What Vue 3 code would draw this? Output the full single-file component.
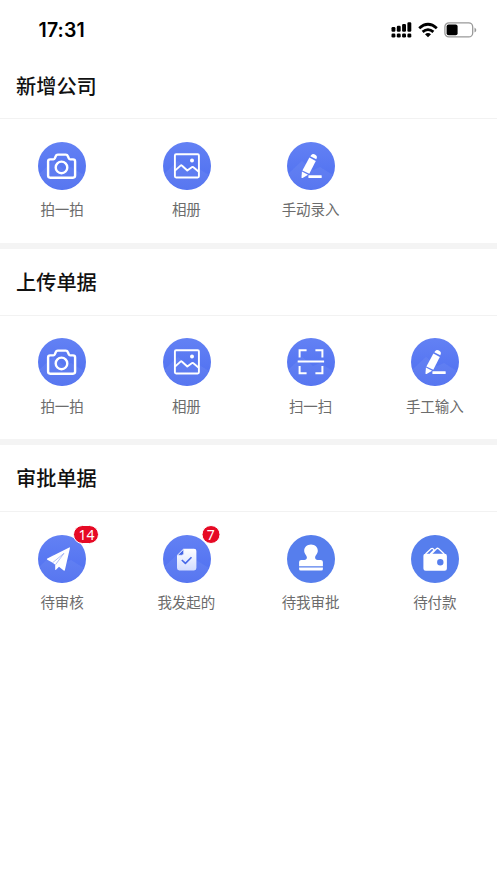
<script setup>
const sections = [
  {
    title: '新增公司',
    items: [
      { label: '拍一拍', icon: 'camera' },
      { label: '相册', icon: 'album' },
      { label: '手动录入', icon: 'pencil' },
    ],
  },
  {
    title: '上传单据',
    items: [
      { label: '拍一拍', icon: 'camera' },
      { label: '相册', icon: 'album' },
      { label: '扫一扫', icon: 'scan' },
      { label: '手工输入', icon: 'pencil' },
    ],
  },
  {
    title: '审批单据',
    items: [
      { label: '待审核', icon: 'plane', badge: 14 },
      { label: '我发起的', icon: 'document', badge: 7 },
      { label: '待我审批', icon: 'stamp', flat: true },
      { label: '待付款', icon: 'wallet', flat: true },
    ],
  },
]
</script>

<template>
  <div class="page">
    <header class="status">
      <span class="time">17:31</span>
      <div class="indicators">
        <svg class="signal" width="21" height="17" viewBox="0 0 21 17">
          <rect x="0.5" y="6" width="3.9" height="4.8" rx="1.2" />
          <rect x="5.8" y="4.8" width="3.9" height="6" rx="1.2" />
          <rect x="11.1" y="3" width="3.9" height="7.8" rx="1.2" />
          <rect x="16.4" y="1.2" width="3.9" height="9.6" rx="1.2" />
          <rect v-for="n in 4" :key="n" :x="n * 5.3 - 4.8" y="12.5" width="3.9" height="4" rx="1.3" />
        </svg>
        <svg class="wifi" width="20" height="16" viewBox="0 0 20 16" fill="none" stroke="#000" stroke-width="2.8">
          <path d="M1.2 6.2Q10-1.6 18.8 6.2" />
          <path d="M4.6 9.9Q10 5.3 15.4 9.9" />
          <path d="M10 15.2l-3-3Q10 9.8 13 12.2z" fill="#000" stroke="none" />
        </svg>
        <svg class="battery" width="33" height="16" viewBox="0 0 33 16">
          <rect x="0.9" y="0.9" width="27.8" height="14" rx="4" fill="none" stroke="#999" stroke-width="1.3" />
          <rect x="2.6" y="2.6" width="11" height="10.6" rx="2" />
          <path d="M30.5 5.5q1.8 1 1.8 2.5t-1.8 2.5z" fill="#999" />
        </svg>
      </div>
    </header>

    <section v-for="section in sections" :key="section.title" class="section">
      <h2 class="title">{{ section.title }}</h2>
      <div class="grid">
        <div v-for="item in section.items" :key="item.label" class="item">
          <div class="circle" :class="{ flat: item.flat }">
            <svg width="48" height="48" viewBox="0 0 48 48" fill="none" stroke="#fff" stroke-linejoin="round">
              <path v-if="!item.flat" d="M2 31L15 19 26 28 33 25 46 33A24 24 0 0 1 2 33Z" fill="#fff" fill-opacity=".06" stroke="none" />
              <g v-if="item.icon === 'camera'" stroke-width="2.4">
                <path d="M12.2 17.4h3.2q1 0 1.4-1l1-2.4q.5-1.4 2-1.4h8q1.5 0 2 1.4l1 2.4q.4 1 1.4 1h2.8q2.1 0 2.1 2.1v14.1q0 2.1-2.1 2.1H12.2q-2.1 0-2.1-2.1V19.5q0-2.1 2.1-2.1z" />
                <circle cx="23.5" cy="25.4" r="5.8" />
              </g>
              <g v-else-if="item.icon === 'album'" stroke-width="1.9">
                <rect x="11.9" y="12.3" width="24" height="23.2" rx="1.2" />
                <path d="M12 28.6l5.8-5.2q.5-.4 1 .1l5.5 5 4.8-3.5q.5-.3 1 .1l5.7 4.6" />
                <circle cx="29" cy="18.5" r="2" fill="#fff" stroke="none" />
              </g>
              <g v-else-if="item.icon === 'pencil'" fill="#fff" stroke="none">
                <path d="M23.3 14.2l1-1.3q1.3-1.7 3.7-.5 2.5 1.3 1.9 3.2l-.6 1.6z" />
                <path d="M22.4 15.5l6.4 3.4-6.5 12.8-6.9-3.2z" />
                <path d="M14.9 29.6l6.2 3.2-5.5 3.2q-1.1.3-1.1-.8z" />
                <rect x="21.4" y="33.3" width="13.3" height="2.6" rx=".5" />
              </g>
              <g v-else-if="item.icon === 'scan'" stroke-width="2" stroke-linejoin="miter">
                <path d="M12.6 19.6v-7.3h7M28.4 12.3h7v7.3M12.6 28v7.2h7M28.4 35.2h7V28M10.7 23.5h26.4" />
              </g>
              <g v-else-if="item.icon === 'plane'" fill="#fff" stroke="none">
                <path d="M31.2 12.4q.9-.2.7.9l-5 21.7q-.3 1-1.2.4L21 31.8l-3 3q-.8.6-.8-.4v-4.7l-2.5-2-5.4-3q-1-.6 0-1.1z" />
                <path d="M14.8 27.5L26 18.3 17.6 29.6" stroke="#7f96f0" stroke-width=".6" />
              </g>
              <g v-else-if="item.icon === 'document'">
                <path d="M20.5 13.7H31q2.4 0 2.4 2.3v17q0 2.4-2.4 2.4H16.4q-2.4 0-2.4-2.4V20.2z" fill="url(#paper)" stroke="none" />
                <path d="M20.7 14.2v4.1q0 2-2 2h-4.2z" fill="#4465e5" stroke="#e4eaff" stroke-width=".8" />
                <path d="M18.8 25l3.6 3.4 6.1-6.2" stroke="#4668e8" stroke-width="1.6" />
              </g>
              <g v-else-if="item.icon === 'stamp'" fill="#fff" stroke="none">
                <path d="M24 9.6c4 0 6.8 2.9 6.8 6.2 0 3.3-2.7 4.3-2.7 6.8 0 1.7 1 2.3 2.5 2.3h3.1q2.2 0 2.2 2.2v4.1H12.1v-4.1q0-2.2 2.2-2.2h3.1c1.5 0 2.5-.6 2.5-2.3 0-2.5-2.7-3.5-2.7-6.8 0-3.3 2.8-6.2 6.8-6.2z" />
                <path d="M12.1 32.4h23.8v1.7q0 1.5-1.5 1.5H13.6q-1.5 0-1.5-1.5z" />
              </g>
              <g v-else-if="item.icon === 'wallet'">
                <path d="M14.5 19l5.6-5.2q1.1-1 2.1.1l1 1.1-4 4M20.4 19l5.1-5.2q1-1 2.2 0l5.5 5.2" stroke-width="1.3" />
                <path fill-rule="evenodd" d="M14.4 18.7h19.2q2.3 0 2.3 2.3v12.4q0 2.3-2.3 2.3H14.7q-2.3 0-2.3-2.3V20.7q0-2 2-2zM29.3 24.1a3.2 3.2 0 1 0 0 6.4 3.2 3.2 0 0 0 0-6.4z" fill="#fff" stroke="none" />
              </g>
              <defs v-if="item.icon === 'document'">
                <linearGradient id="paper" x1="0" y1="0" x2="0" y2="1">
                  <stop stop-color="#fff" />
                  <stop offset="1" stop-color="#d2dcff" />
                </linearGradient>
              </defs>
            </svg>
            <span v-if="item.badge" class="badge">{{ item.badge }}</span>
          </div>
          <span class="label">{{ item.label }}</span>
        </div>
      </div>
    </section>
  </div>
</template>

<style>
body {
  background: #fff;
}
</style>

<style scoped>
.page {
  width: 100%;
  height: 883px;
  overflow: hidden;
  font-family: "Noto Sans CJK SC", sans-serif;
}
.status {
  box-sizing: border-box;
  height: 52px;
  padding: 8px 20px 0 38.5px;
  display: flex;
  justify-content: space-between;
  align-items: center;
}
.time {
  font: 600 19.5px/24px Inter, sans-serif;
  letter-spacing: 0.15px;
  color: #000;
}
.indicators {
  display: flex;
  align-items: center;
  gap: 7px;
}
.signal {
  margin: 0 -1px 2px 0;
}
.battery {
  margin-left: -1px;
}
.section + .section {
  border-top: 6px solid #f4f4f4;
}
.title {
  box-sizing: border-box;
  height: 67px;
  margin: 0;
  padding-left: 16px;
  border-bottom: 1px solid #f2f2f2;
  font-size: 20.2px;
  font-weight: 500;
  line-height: 66px;
  color: #111;
}
.section:first-of-type .title {
  line-height: 67px;
}
.grid {
  box-sizing: border-box;
  height: 123.5px;
  padding-top: 22.7px;
  display: grid;
  grid-template-columns: repeat(4, 1fr);
}
.item {
  display: flex;
  flex-direction: column;
  align-items: center;
}
.circle {
  position: relative;
  left: 0.3px;
  width: 48px;
  height: 48px;
  border-radius: 50%;
  background: linear-gradient(#6381f4, #4d6ef0);
}
.circle.flat {
  background: #567eed;
}
.circle svg {
  display: block;
}
.badge {
  position: absolute;
  left: 48px;
  top: -9.5px;
  transform: translateX(-50%);
  box-sizing: border-box;
  min-width: 19px;
  height: 19px;
  padding: 0 4px;
  border: 1px solid #fff;
  border-radius: 10px;
  background: #e60a25;
  color: #fff;
  font: 14px/17px "Noto Sans", sans-serif;
  text-align: center;
}
.label {
  margin-top: 8.4px;
  font-size: 14.5px;
  line-height: 22px;
  color: #6c6c6c;
}
</style>
